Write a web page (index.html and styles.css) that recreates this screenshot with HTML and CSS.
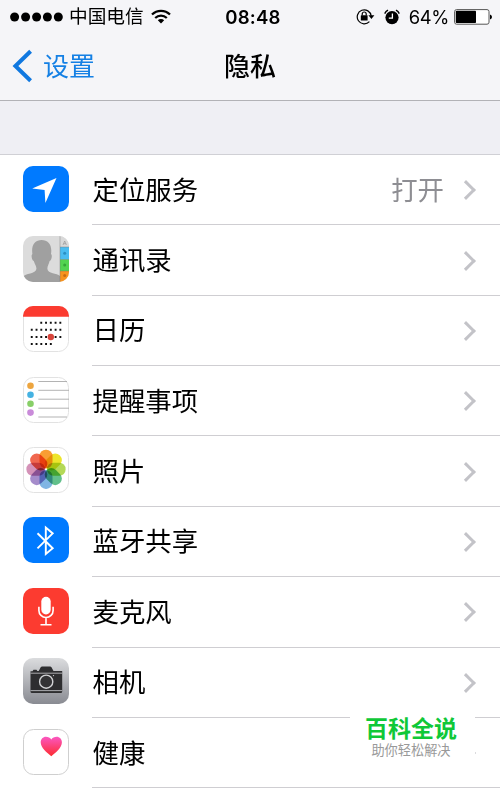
FILE: index.html
```html
<!DOCTYPE html>
<html lang="zh-CN">

<head>
    <meta charset="UTF-8">
    <meta name="viewport" content="width=device-width, initial-scale=1.0">
    <title>隐私</title>
    <link rel="stylesheet" href="styles.css">
</head>

<body>
    <header class="header">
        <div class="status-bar">
            <div class="status-left">
                <svg class="signal" width="54" height="10" viewBox="0 0 54 10">
                    <circle cx="4.6" cy="5" r="4.5"/><circle cx="15.6" cy="5" r="4.5"/><circle cx="26.6" cy="5" r="4.5"/><circle cx="37.4" cy="5" r="4.5"/><circle cx="48.3" cy="5" r="4.5"/>
                </svg>
                <span class="carrier">中国电信</span>
                <svg class="wifi" width="20" height="15" viewBox="0 0 20 15" fill="none" stroke="#000" stroke-width="2.2">
                    <path d="M1 5.6a12.6 12.6 0 0 1 18 0M4.2 9a8.2 8.2 0 0 1 11.6 0"/>
                    <path d="M6.8 11.3a4.6 4.6 0 0 1 6.4 0L10 14.4z" fill="#000" stroke="none"/>
                </svg>
            </div>
            <span class="time">08:48</span>
            <div class="status-right">
                <svg class="lock" width="19" height="17" viewBox="0 0 19 17">
                    <path d="M13.4 13.6A7 7 0 1 1 15.2 8" fill="none" stroke="#000" stroke-width="1.2"/>
                    <path d="M12.4 7.3h6L15.4 11z"/>
                    <rect x="4.8" y="7.2" width="6.8" height="5.2" rx=".5"/>
                    <path d="M6.2 7.5V6a2 2 0 0 1 4 0v1.5" fill="none" stroke="#000" stroke-width="1.2"/>
                </svg>
                <svg class="alarm" width="16" height="16" viewBox="0 0 16 16">
                    <circle cx="8" cy="8.6" r="6.6"/>
                    <path d="M.7 4.6A8 8 0 0 1 4 1.2M15.3 4.6A8 8 0 0 0 12 1.2" fill="none" stroke="#000" stroke-width="1.4"/>
                    <path d="M8.4 4.6v4.5H4.8" fill="none" stroke="#fff" stroke-width="1.3"/>
                </svg>
                <span class="percent">64%</span>
                <svg class="battery" width="38" height="16" viewBox="0 0 38 16">
                    <rect x=".6" y=".6" width="34.4" height="14.6" rx="2" fill="#fff" stroke="#555" stroke-width="1"/>
                    <rect x="1.8" y="1.8" width="20.2" height="12.2" rx=".8"/>
                    <path d="M36 5.4q2 .6 2 2.5t-2 2.5z"/>
                </svg>
            </div>
        </div>
        <nav class="nav">
            <a class="back" href="#">
                <svg width="21" height="34" viewBox="0 0 21 34" fill="none" stroke="#1078e0" stroke-width="4">
                    <path d="M18.6 2.2L3.4 17l15.2 14.8"/>
                </svg>
                <span>设置</span>
            </a>
            <h1>隐私</h1>
        </nav>
    </header>

    <ul class="list">
        <li class="row">
            <svg class="icon" viewBox="0 0 46 46">
                <rect width="46" height="46" rx="10" fill="#007aff"/>
                <path d="M33.5 12L22.4 37l-.8-13L9.2 22.6z" fill="#fff"/>
            </svg>
            <div class="cell"><span class="label">定位服务</span><span class="value">打开</span><i class="arrow"></i></div>
        </li>
        <li class="row">
            <svg class="icon" viewBox="0 0 46 46">
                <defs><clipPath id="round"><rect width="46" height="46" rx="10"/></clipPath></defs>
                <g clip-path="url(#round)">
                    <rect width="46" height="46" fill="#dcdcdc"/>
                    <path d="M0 46v-5c2-4 13-3 13.4-8 .2-3-1.6-4.5-2.6-8-2-.4-3-6-1.4-7C8 9 12 4 18.6 4S29.5 9 28 18c1.6 1 .6 6.6-1.4 7-.8 3.5-2.4 5-2.2 8 .4 5 9.6 4 12.6 7v6z" fill="#a0a0a0"/>
                    <rect x="37" width="9" height="11" fill="#d9d9d9"/>
                    <rect x="37" y="11" width="9" height="12.5" fill="#4bbcf0"/>
                    <rect x="37" y="23.5" width="9" height="11.5" fill="#53d450"/>
                    <rect x="37" y="35" width="9" height="11" fill="#f7931e"/>
                    <path d="M37 0v46M37 11h9M37 23.5h9M37 35h9" stroke="#777" stroke-width=".7" opacity=".6"/>
                    <path d="M40 9l1.7-4 1.7 4M40.6 7.7h2.2" fill="none" stroke="#999" stroke-width=".7"/>
                    <circle cx="41.7" cy="17.3" r="1.5" fill="#2c8fc2"/>
                    <circle cx="41.7" cy="29" r="1.5" fill="#35a638"/>
                    <circle cx="41.7" cy="39.5" r="1.5" fill="#c96d13"/>
                </g>
            </svg>
            <div class="cell"><span class="label">通讯录</span><i class="arrow"></i></div>
        </li>
        <li class="row">
            <svg class="icon" viewBox="0 0 46 46">
                <rect x=".5" y=".5" width="45" height="45" rx="10" fill="#fff" stroke="#e2e2e2"/>
                <path d="M0 10.7V10A10 10 0 0 1 10 0h26a10 10 0 0 1 10 10v.7z" fill="#fb3b30"/>
                <!-- days of the month -->
                <g stroke="#111" stroke-width="1.9" stroke-dasharray="1.9 2.87">
                    <path d="M17.3 16.8h21"/>
                    <path d="M7.8 23.8h31"/>
                    <path d="M7.8 31h31"/>
                    <path d="M7.8 38h21.5"/>
                </g>
                <circle cx="27.8" cy="31" r="3.2" fill="#d8443a"/>
            </svg>
            <div class="cell"><span class="label">日历</span><i class="arrow"></i></div>
        </li>
        <li class="row">
            <svg class="icon" viewBox="0 0 46 46">
                <rect x=".5" y=".5" width="45" height="45" rx="10" fill="#fff" stroke="#e2e2e2"/>
                <path d="M15.3 4.5H44M15.3 13.3H46M15.3 22.2H46M15.3 31.2H46M15.3 40H44" stroke="#aaa" stroke-width=".9"/>
                <circle cx="7.5" cy="8.8" r="3.3" fill="#eda53f"/>
                <circle cx="7.5" cy="17.7" r="3.3" fill="#45b2e2"/>
                <circle cx="7.5" cy="26.8" r="3.3" fill="#88cf68"/>
                <circle cx="7.5" cy="35.6" r="3.3" fill="#c98bd9"/>
            </svg>
            <div class="cell"><span class="label">提醒事项</span><i class="arrow"></i></div>
        </li>
        <li class="row">
            <svg class="icon" viewBox="0 0 46 46">
                <rect x=".5" y=".5" width="45" height="45" rx="10" fill="#fff" stroke="#e2e2e2"/>
                <g class="petals">
                    <rect x="16.5" y="2.7" width="13" height="18.6" rx="6.2" fill="#f99d33"/>
                    <rect x="16.5" y="2.7" width="13" height="18.6" rx="6.2" fill="#ede52c" transform="rotate(45 23 22.3)"/>
                    <rect x="16.5" y="2.7" width="13" height="18.6" rx="6.2" fill="#b4d957" transform="rotate(90 23 22.3)"/>
                    <rect x="16.5" y="2.7" width="13" height="18.6" rx="6.2" fill="#62c08b" transform="rotate(135 23 22.3)"/>
                    <rect x="16.5" y="2.7" width="13" height="18.6" rx="6.2" fill="#80b5e4" transform="rotate(180 23 22.3)"/>
                    <rect x="16.5" y="2.7" width="13" height="18.6" rx="6.2" fill="#a58ccb" transform="rotate(225 23 22.3)"/>
                    <rect x="16.5" y="2.7" width="13" height="18.6" rx="6.2" fill="#d492b8" transform="rotate(270 23 22.3)"/>
                    <rect x="16.5" y="2.7" width="13" height="18.6" rx="6.2" fill="#f0674f" transform="rotate(315 23 22.3)"/>
                </g>
            </svg>
            <div class="cell"><span class="label">照片</span><i class="arrow"></i></div>
        </li>
        <li class="row">
            <svg class="icon" viewBox="0 0 46 46">
                <rect width="46" height="46" rx="10" fill="#007aff"/>
                <path d="M14.5 16.2l15.2 15L22.8 37V10.6l6.9 5.8-15.2 15" fill="none" stroke="#fff" stroke-width="1.9"/>
            </svg>
            <div class="cell"><span class="label">蓝牙共享</span><i class="arrow"></i></div>
        </li>
        <li class="row">
            <svg class="icon" viewBox="0 0 46 46">
                <rect width="46" height="46" rx="10" fill="#fc3b30"/>
                <rect x="18.3" y="8.8" width="9.4" height="17.6" rx="4.7" fill="#fff"/>
                <path d="M15.9 18.8v3.6a7.1 7.1 0 0 0 14.2 0v-3.6M23 29.5v7M17.5 36.8h11" fill="none" stroke="#fff" stroke-width="1.6"/>
            </svg>
            <div class="cell"><span class="label">麦克风</span><i class="arrow"></i></div>
        </li>
        <li class="row">
            <svg class="icon" viewBox="0 0 46 46">
                <defs>
                    <linearGradient id="metal" x2="0" y2="1"><stop stop-color="#dbdcde"/><stop offset="1" stop-color="#898b92"/></linearGradient>
                </defs>
                <rect width="46" height="46" rx="10" fill="url(#metal)"/>
                <path d="M7.5 13.3h2l1-1.6h3l.8 1.3h1.4l2-3.7q.5-.8 1.4-.8h8q.9 0 1.4.8l2 3.7h8.7v20.5q0 1.5-1.5 1.5H9q-1.5 0-1.5-1.5z" fill="#2e2e30"/>
                <path d="M7.5 15.2h31.7M7.5 32.6h31.7" stroke="#b8b9bc" stroke-width=".9"/>
                <circle cx="23.2" cy="23.7" r="6.6" fill="#333335" stroke="#d2d3d5" stroke-width="1.4"/>
                <circle cx="30.5" cy="17.6" r=".7" fill="#d2d3d5"/>
            </svg>
            <div class="cell"><span class="label">相机</span><i class="arrow"></i></div>
        </li>
        <li class="row">
            <svg class="icon" viewBox="0 0 46 46">
                <defs>
                    <linearGradient id="heart" x2="0" y2="1"><stop stop-color="#fb57c2"/><stop offset="1" stop-color="#fd2c30"/></linearGradient>
                </defs>
                <rect x=".5" y=".5" width="45" height="45" rx="10" fill="#fff" stroke="#cfcfcf"/>
                <path d="M28.3 27.2C24 23.7 17.7 19 17.7 13.3c0-3.3 2.3-5.6 5.2-5.6 2.3 0 4.3 1 5.4 2.8 1.1-1.8 3.1-2.8 5.4-2.8 2.9 0 5.2 2.3 5.2 5.6 0 5.7-6.3 10.4-10.6 13.9z" fill="url(#heart)"/>
            </svg>
            <div class="cell"><span class="label">健康</span><i class="arrow"></i></div>
        </li>
    </ul>

    <div class="watermark">
        <strong>百科全说</strong>
        <span>助你轻松解决</span>
    </div>
</body>

</html>
```
FILE: styles.css
```css
* {
    box-sizing: border-box;
}

body {
    font-family: "Liberation Sans", "Noto Sans CJK SC", sans-serif;
    background-color: #fff;
    color: #000;
    margin: 0;
    height: 789px;
    overflow: hidden;
    position: relative;
}

.header {
    height: 101px;
    background-color: #f5f5f8;
    border-bottom: 1px solid #b2b2b6;
}

.status-bar {
    display: grid;
    grid-template-columns: 1fr auto 1fr;
    align-items: center;
    height: 32px;
    padding: 0 8px 0 10px;
}

.status-left,
.status-right {
    display: flex;
    align-items: center;
}

.status-right {
    justify-content: flex-end;
}

.carrier {
    font-size: 18.7px;
    line-height: 32px;
    padding-top: 1px;
    margin: 0 7px 0 5px;
}

.time {
    font-family: Inter, sans-serif;
    font-size: 18.6px;
    font-weight: 600;
    letter-spacing: 0.2px;
    padding-left: 4px;
}

.alarm {
    margin: 0 9px;
}

.percent {
    font-family: Inter, sans-serif;
    font-size: 18.4px;
    letter-spacing: -0.4px;
    margin-right: 5px;
}

.nav {
    display: grid;
    grid-template-columns: 1fr auto 1fr;
    align-items: center;
    height: 68px;
}

.back {
    display: flex;
    align-items: center;
    gap: 10px;
    padding-left: 12px;
    font-size: 26px;
    line-height: 34px;
    color: #1580e4;
    text-decoration: none;
}

.back span,
h1 {
    padding-top: 2px;
}

h1 {
    margin: 0;
    font-size: 26px;
    font-weight: 500;
    line-height: 34px;
}

.list {
    list-style: none;
    margin: 0;
    padding: 54px 0 0;
    background: linear-gradient(#efeff4 53px, #d0d0d5 53px, #d0d0d5 54px, #fff 54px);
}

.row {
    display: flex;
    align-items: center;
    height: 70.36px;
    padding-left: 23px;
}

.icon {
    width: 46px;
    height: 46px;
    margin: 0 23px 3px 0;
}

.petals rect {
    mix-blend-mode: multiply;
}

.cell {
    display: flex;
    align-items: center;
    flex: 1;
    height: 100%;
    padding: 1px 27px 0 0;
    border-bottom: 1px solid #cfced2;
}

.label,
.value {
    font-size: 26.4px;
    line-height: 36px;
    padding-top: 1px;
}

.label {
    flex: 1;
    padding-left: 0.5px;
}

.value {
    color: #8e8e93;
    margin-right: 15px;
}

/* disclosure chevron */
.arrow {
    width: 14px;
    height: 14px;
    border: solid #c3c3c8;
    border-width: 3px 3px 0 0;
    transform: rotate(45deg);
}

.watermark {
    position: absolute;
    left: 350px;
    top: 707px;
    width: 125px;
    height: 68px;
    padding: 8px 3px 0 0;
    display: flex;
    flex-direction: column;
    align-items: center;
    background-color: #fff;
}

.watermark strong {
    font-size: 23px;
    font-weight: 700;
    line-height: 28px;
    color: #0fc838;
}

.watermark span {
    font-size: 13.2px;
    line-height: 16px;
    color: #999;
}
```
